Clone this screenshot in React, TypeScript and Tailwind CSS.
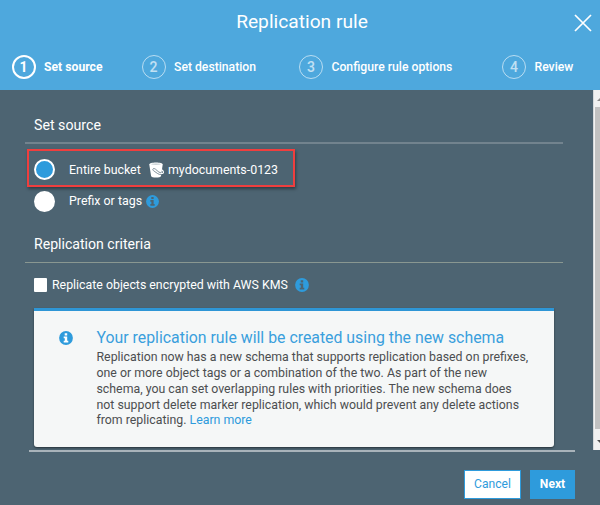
import React from "react";

function InfoIcon({ size, hole }: { size: number; hole: string }) {
  return (
    <svg width={size} height={size} viewBox="0 0 14 14" className="block shrink-0">
      <circle cx="7" cy="7" r="6.9" fill="#2e9bdc" />
      <path d="M5.7 2.2h2.500v2.200H5.700zM4.700 5.400h3.500v4.300h1.100v1.800H4.700V9.700h1.100V7.200H4.700z" fill={hole} />
    </svg>
  );
}

function BucketIcon() {
  return (
    <svg width="15" height="16" viewBox="0 0 15 16" className="block shrink-0">
      <path d="M.3 2.4C.3 1.1 3.2.4 7 .4s6.700.700 6.700 2L12 14.100c-.2 1-2.400 1.500-5 1.500s-4.700-.5-4.900-1.500z" fill="#fff" />
      <ellipse cx="7" cy="2.100" rx="5" ry=".6" fill="#bcc6cb" />
      <path d="M12.400 7.500c1.300.9 2.400 2.200 2 3.200-.4.900-1.900.8-3.200.2" fill="none" stroke="#fff" strokeWidth="1.100" />
      <path d="M12 10.900c-1.700-.3-2.600-1.200-3.800-2.200L6.500 7.200c-.9-.7-2.200-1-2.600-.1-.3.800.3 1.400 1.200 2l3.600 2.500c1 .7 2 .9 3.200 1" fill="none" stroke="#71838e" strokeWidth=".9" />
    </svg>
  );
}

function Step({ n, label, active, className }: { n: number; label: string; active?: boolean; className: string }) {
  return (
    <div className={`flex items-center whitespace-nowrap ${className}`}>
      <span
        className={`flex h-6 w-6 shrink-0 items-center justify-center rounded-full text-[14px] leading-none ${
          active ? "border-2 border-white font-bold" : "border-[1.500px] border-white/60 font-medium text-white/65"
        }`}
      >
        {n}
      </span>
      <span className={`ml-[8.500px] mt-[1px] text-[12.200px] ${active ? "font-bold" : "font-medium"}`}>{label}</span>
    </div>
  );
}

export default function App() {
  return (
    <div className="flex h-[505px] w-[600px] flex-col overflow-hidden bg-[#4d6472] font-['Roboto',sans-serif] text-[12.400px] text-white">
      <header className="h-[90px] shrink-0 bg-[#4ea8dd]">
        <div className="flex h-[44px] items-center">
          <div className="w-[30px] shrink-0" />
          <h1 className="flex-1 text-center text-[19.200px] leading-none">Replication rule</h1>
          <svg width="18" height="18" viewBox="0 0 18 18" className="mr-[8px] mt-[1px] block">
            <path d="M1 1l16 16M17 1L1 17" stroke="#fff" strokeWidth="1.700" />
          </svg>
        </div>
        <nav className="flex h-[46px] items-center pl-[11.500px]">
          <Step n={1} label="Set source" active className="w-[130px]" />
          <Step n={2} label="Set destination" className="w-[157.500px]" />
          <Step n={3} label="Configure rule options" className="w-[203px]" />
          <Step n={4} label="Review" className="" />
        </nav>
      </header>
      <div className="flex h-[360px] shrink-0">
        <main className="h-full w-[593px] pl-[25px]">
          <h2 className="flex h-[54px] w-[538px] items-end border-b-2 border-[#72838e] pb-[8px] pl-[9px] text-[14.200px] leading-[18px]">
            Set source
          </h2>
          <div className="ml-[2px] mt-[5px] flex h-[38px] w-[268px] items-center border-2 border-[#f03e3e] pl-[5px] pt-[3px] shadow-[1px_2px_3px_rgba(0,0,0,0.4)]">
            <span className="h-[21px] w-[21px] rounded-full border-2 border-white bg-[#2e9bdc]" />
            <span className="ml-[14px] mt-[1px] w-[72px]">Entire bucket</span>
            <span className="ml-[8px]">
              <BucketIcon />
            </span>
            <span className="ml-[4px] mt-[1px]">mydocuments-0123</span>
          </div>
          <div className="mt-[2px] flex h-[24px] items-center pl-[9px]">
            <span className="h-[21px] w-[21px] rounded-full bg-white" />
            <span className="ml-[14px] w-[77px]">Prefix or tags</span>
            <InfoIcon size={13} hole="#4d6472" />
          </div>
          <h2 className="flex h-[50px] w-[538px] items-end border-b border-[#899791] pb-[9px] pl-[9px] text-[14.100px] leading-[18px]">
            Replication criteria
          </h2>
          <div className="mt-[11px] flex h-[22px] items-center pl-[9px]">
            <span className="h-[14px] w-[13px] rounded-[1px] bg-white" />
            <span className="ml-[5px] mt-[1px] w-[243px] text-[12.350px]">Replicate objects encrypted with AWS KMS</span>
            <InfoIcon size={14} hole="#4d6472" />
          </div>
          <section className="ml-[9px] mt-[12px] flex h-[139px] w-[520px] rounded-b-[3px] border-t-[3px] border-[#2e96d6] bg-[#f5f7f7] pl-[25px] pt-[16px] shadow-[0_1px_2px_rgba(0,0,0,0.5)]">
            <span className="mt-[4px]">
              <InfoIcon size={14} hole="#fff" />
            </span>
            <div className="ml-[23.500px] whitespace-nowrap">
              <h3 className="text-[15.850px] leading-[22px] text-[#3a9fdd]">Your replication rule will be created using the new schema</h3>
              <p className="pt-[1.200px] text-[12.340px] leading-[15.800px] text-[#4c4e50]">
                Replication now has a new schema that supports replication based on prefixes,
                <br />
                one or more object tags or a combination of the two. As part of the new
                <br />
                schema, you can set overlapping rules with priorities. The new schema does
                <br />
                not support delete marker replication, which would prevent any delete actions
                <br />
                from replicating. <a className="text-[#2e9bdc]">Learn more</a>
              </p>
            </div>
          </section>
        </main>
        <div className="flex h-full w-[7px] flex-col border-l border-[#d5d9db] bg-[#f1f1f1] pl-[1px]">
          <svg width="5" height="17" viewBox="0 0 5 17" className="block shrink-0">
            <path d="M2 11l3-3v3z" fill="#8a8a8a" />
          </svg>
          <div className="h-[322px] w-[5px] bg-[#c1c1c1]" />
          <svg width="5" height="20" viewBox="0 0 5 20" className="block shrink-0">
            <path d="M2 11h3v3z" fill="#505050" />
          </svg>
        </div>
      </div>
      <footer className="ml-[29px] mr-[25px] border-t-2 border-[#a9b3ba]">
        <div className="flex justify-end gap-[9px] pt-[18px]">
          <button className="h-[29px] w-[57px] border border-[#2e9bdc] bg-white text-[12.100px] text-[#2e9bdc]">Cancel</button>
          <button className="h-[29px] w-[45px] bg-[#2e9bdc] text-[12.100px] font-bold">Next</button>
        </div>
      </footer>
    </div>
  );
}
